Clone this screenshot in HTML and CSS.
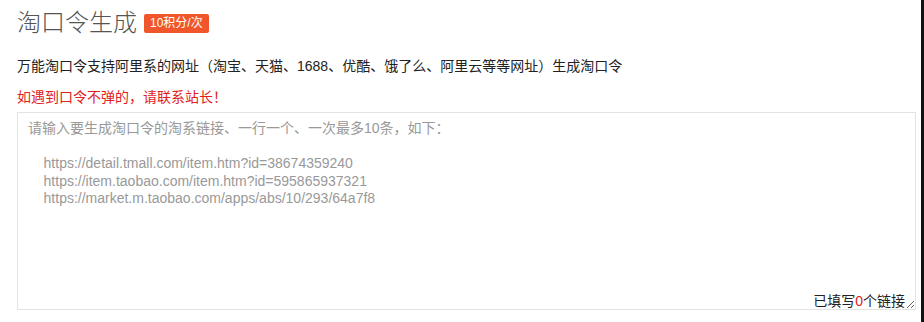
FILE: index.html
```html
<!DOCTYPE html>
<html lang="zh-CN">
<head>
<meta charset="utf-8">
<title>淘口令生成</title>
<link rel="stylesheet" href="styles.css">
</head>
<body>
<div class="page">
  <div class="head">
    <h1 class="title">淘口令生成</h1>
    <span class="badge">10积分/次</span>
  </div>
  <p class="desc">万能淘口令支持阿里系的网址（淘宝、天猫、1688、优酷、饿了么、阿里云等等网址）生成淘口令</p>
  <p class="warn">如遇到口令不弹的，请联系站长！</p>
  <div class="box">
    <textarea class="input" placeholder="请输入要生成淘口令的淘系链接、一行一个、一次最多10条，如下：&#10;&#10;    https://detail.tmall.com/item.htm?id=38674359240&#10;    https://item.taobao.com/item.htm?id=595865937321&#10;    https://market.m.taobao.com/apps/abs/10/293/64a7f8"></textarea>
    <div class="count">已填写<span class="num">0</span>个链接</div>
  </div>
</div>
</body>
</html>
```

FILE: styles.css
```css
html, body {
  margin: 0;
  padding: 0;
  background: #fff;
}
body {
  font-family: "Liberation Sans", "Noto Sans CJK SC", sans-serif;
  color: #333;
}
.page {
  width: 924px;
  height: 322px;
  box-sizing: border-box;
  border-right: 3px solid #111;
  padding-left: 17px;
}
.head {
  display: flex;
  align-items: center;
  height: 46px;
  gap: 7px;
}
.title {
  margin: 0;
  font-size: 24px;
  font-weight: 300;
  color: #555;
  line-height: 30px;
}
.badge {
  display: inline-block;
  height: 19px;
  line-height: 19px;
  padding: 0 6px;
  background: #f0562a;
  color: #fff;
  font-size: 12px;
  border-radius: 2px;
  margin-top: 1px;
}
.desc {
  margin: 10px 0 0;
  font-size: 14px;
  line-height: 20px;
  color: #222;
}
.warn {
  margin: 11px 0 0;
  font-size: 14px;
  line-height: 20px;
  color: #e0211b;
}
.box {
  position: relative;
  margin-top: 5px;
  width: 899px;
  height: 198px;
}
.input {
  display: block;
  box-sizing: border-box;
  width: 100%;
  height: 100%;
  margin: 0;
  border: 1px solid #e3e3e3;
  padding: 7px 10px;
  font-family: "Liberation Sans", "Noto Sans CJK SC", sans-serif;
  font-size: 14px;
  line-height: 17.5px;
  color: #333;
  background: #fff;
  outline: none;
}
.input::placeholder {
  color: #999;
}
.count {
  position: absolute;
  right: 11px;
  bottom: 1px;
  font-size: 14px;
  line-height: 16px;
  color: #222;
}
.num {
  color: #e0211b;
}
```
